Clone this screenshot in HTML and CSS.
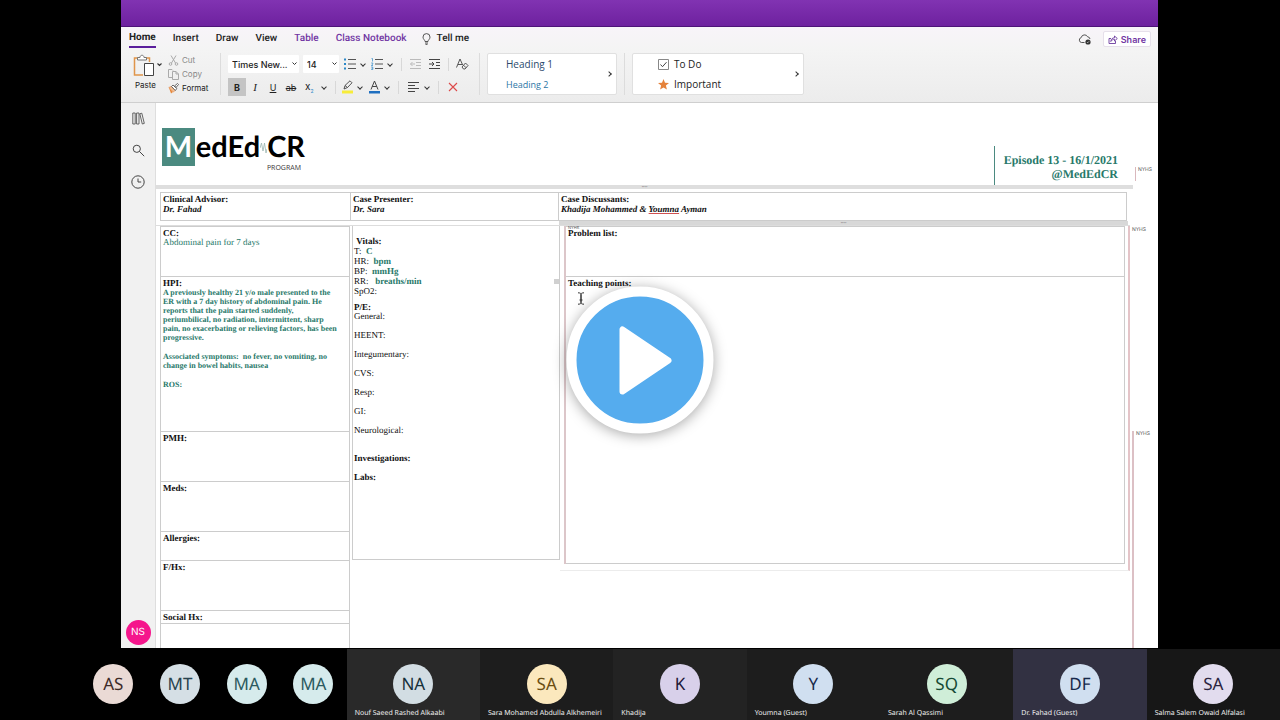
FILE: index.html
```html
<!DOCTYPE html>
<html lang="en">
<head>
    <meta charset="UTF-8">
    <meta name="viewport" content="width=device-width, initial-scale=1.0">
    <title>MedEdCR Episode 13</title>
    <link rel="stylesheet" href="styles.css">
</head>
<body>
    <div class="window">
        <div class="titlebar"></div>

        <header class="ribbon">
            <nav class="tabs">
                <a href="#" class="active">Home</a>
                <a href="#">Insert</a>
                <a href="#">Draw</a>
                <a href="#">View</a>
                <a href="#" class="context">Table</a>
                <a href="#" class="context">Class Notebook</a>
                <a href="#" class="tell-me">
                    <svg width="9" height="12" viewBox="0 0 9 12" fill="none" stroke="#444" stroke-width="0.9"><path d="M3 8.5C3 7 1 6.200 1 4.100a3.500 3.500 0 0 1 7 0C8 6.200 6 7 6 8.500zM3 10h3M3.500 11.400h2"/></svg>
                    Tell me
                </a>
                <span class="spacer"></span>
                <svg class="cloud" width="14" height="11" viewBox="0 0 14 11" fill="none" stroke="#444"><path d="M6.500 8.500H3.500a2.500 2.500 0 0 1-.3-4.900A3.400 3.400 0 0 1 9.600 2.800 2.600 2.600 0 0 1 12 5" stroke-width="0.9"/><circle cx="10" cy="8" r="2.600" fill="#333" stroke="none"/><path d="M8.900 8l.8.8 1.400-1.500" stroke="#fff" stroke-width="0.6"/></svg>
                <button class="share">
                    <svg width="10" height="9" viewBox="0 0 10 9" fill="none" stroke="#6b3a9e" stroke-width="0.9"><path d="M3 3.500H1v5h6.500V6M2.800 6.500C3 4 4.500 2.800 6.500 2.800V1L9.300 3.500 6.500 6V4.300C5 4.300 3.800 5 2.800 6.500z"/></svg>
                    Share
                </button>
            </nav>

            <div class="tools">
                <button class="paste">
                    <svg width="28" height="24" viewBox="0 0 28 24" fill="none"><path d="M5 4H1.500v17H10" stroke="#e0954a" stroke-width="1.500"/><path d="M13 4h3.500v4" stroke="#e0954a" stroke-width="1.500"/><path d="M4.500 6V3.500H7C7 .5 11 .5 11 3.500h2.500V6z" stroke="#777" fill="#fff"/><path d="M11.500 9.500h9v12h-9z" fill="#fff" stroke="#444"/><path d="M24.500 9.500l2 2 2-2" stroke="#333" stroke-width="1.100"/></svg>
                    <span>Paste</span>
                </button>
                <div class="clip-actions">
                    <button class="dim"><svg width="11" height="11" viewBox="0 0 11 11" fill="none" stroke="#aaa"><path d="M3 .5L7.500 8M8 .5L3.500 8"/><circle cx="2.500" cy="9" r="1.300"/><circle cx="8.500" cy="9" r="1.300"/></svg>Cut</button>
                    <button class="dim"><svg width="11" height="11" viewBox="0 0 11 11" fill="none" stroke="#aaa"><path d="M4 8.500H.5v-8H4l1 1M4.500 2.500H8l2.500 2.500v5.500h-6zM8 2.500V5h2.500"/></svg>Copy</button>
                    <button><svg width="11" height="11" viewBox="0 0 11 11" fill="none"><path d="M.8 4.500L5 9 3 10.500 2.500 9z" fill="#e8883a"/><path d="M.8 4.500l2.500-1L7 7.500 5.500 9z" fill="#f3c298" stroke="#e0803a" stroke-width=".6"/><path d="M3.500 3.500L5 2l3.800 3.500-1.500 2zM6.500 3l3-2.500 1 1L8 4.500z" stroke="#444" stroke-width=".8" fill="#fff"/></svg>Format</button>
                </div>
                <span class="divider"></span>

                <div class="font-tools">
                    <div class="tool-row">
                        <select class="font-name" aria-label="Font"><option>Times New...</option></select>
                        <select class="font-size" aria-label="Font size"><option>14</option></select>
                        <button class="menu" aria-label="Bullets"><svg width="12" height="12" viewBox="0 0 12 12"><path d="M4 1.500h8M4 6h8M4 10.500h8" stroke="#555"/><path d="M0 .5h2v2H0zM0 5h2v2H0zM0 9.500h2v2H0z" fill="#2b88c8"/></svg><i class="caret"></i></button>
                        <button class="menu" aria-label="Numbering"><svg width="12" height="12" viewBox="0 0 12 12" fill="none"><path d="M4 1.500h8M4 6h8M4 10.500h8" stroke="#555"/><path d="M.5.5h1v3M.2 5h1.600v1L.3 7.500h1.700M.2 9h1.600v2.500H.2M.5 10.200h1.200" stroke="#2b88c8" stroke-width=".7"/></svg><i class="caret"></i></button>
                        <span class="bar"></span>
                        <button class="single" aria-label="Decrease indent"><svg width="12" height="12" viewBox="0 0 12 12" fill="none" stroke="#bbb"><path d="M0 1.500h11M6 4.500h5M6 7.500h5M0 10.500h11M5 6H.5M2.500 4l-2 2 2 2"/></svg></button>
                        <button class="single" aria-label="Increase indent"><svg width="12" height="12" viewBox="0 0 12 12" fill="none" stroke="#444"><path d="M0 1.500h11M7 4.500h4M7 7.500h4M0 10.500h11M0 6h5M3 4l2 2-2 2"/></svg></button>
                        <span class="bar"></span>
                        <button class="single" aria-label="Clear formatting"><svg width="13" height="12" viewBox="0 0 13 12" fill="none" stroke="#444" stroke-width=".9"><path d="M.5 9.500L4 1l2.700 6M2 6.500h4M6 9l3.500-4L12 7.500 9 11H7.500zM7.500 7.200L10 9.700"/></svg></button>
                    </div>
                    <div class="tool-row">
                        <button class="letter pressed"><b>B</b></button>
                        <button class="letter"><em>I</em></button>
                        <button class="letter"><u>U</u></button>
                        <button class="letter"><s>ab</s></button>
                        <button class="menu wide"><span>x<sub>2</sub></span><i class="caret"></i></button>
                        <span class="bar"></span>
                        <button class="menu" aria-label="Highlight"><svg width="13" height="14" viewBox="0 0 13 14" fill="none"><path d="M1 10.500h11v3H1z" fill="#f7ec3a"/><path d="M3 9l1-3.500L9 .8l2 2L6.500 7.500zM4 5.500l2.500 2" stroke="#444" stroke-width=".9"/></svg><i class="caret"></i></button>
                        <button class="menu" aria-label="Font color"><svg width="13" height="14" viewBox="0 0 13 14" fill="none"><path d="M1 11h11v2.500H1z" fill="#1f6fc0"/><path d="M3 9.500L6.500 1 10 9.500M4.200 6.500h4.600" stroke="#444"/></svg><i class="caret"></i></button>
                        <span class="bar"></span>
                        <button class="menu wide" aria-label="Align"><svg width="12" height="12" viewBox="0 0 12 12" stroke="#444"><path d="M0 1.500h11M0 4.500h7M0 7.500h11M0 10.500h7"/></svg><i class="caret"></i></button>
                        <span class="bar"></span>
                        <button class="single" aria-label="Delete"><svg width="10" height="10" viewBox="0 0 10 10" stroke="#dd4a4a" stroke-width="1.100"><path d="M1 1l8 8M9 1L1 9"/></svg></button>
                    </div>
                </div>
                <span class="divider"></span>

                <div class="gallery styles">
                    <div class="choices">
                        <button class="heading-one">Heading 1</button>
                        <button class="heading-two">Heading 2</button>
                    </div>
                    <i class="caret next"></i>
                </div>
                <span class="divider"></span>
                <div class="gallery tags">
                    <div class="choices">
                        <button><svg width="11" height="11" viewBox="0 0 11 11" fill="#fff" stroke="#888"><path d="M.5.5h10v10H.5z"/><path d="M2.500 5.500l2 2.200 4-4.500" stroke="#444" fill="none"/></svg>To Do</button>
                        <button><svg width="11" height="11" viewBox="0 0 11 11"><path d="M5.500 0l1.500 3.800 4 .2-3.100 2.600 1 4-3.400-2.200-3.400 2.200 1-4L0 4l4-.2z" fill="#e5823a"/></svg>Important</button>
                    </div>
                    <i class="caret next"></i>
                </div>
            </div>
        </header>

        <div class="workspace">
            <aside class="rail">
                <button aria-label="Notebooks"><svg width="13" height="13" viewBox="0 0 13 13" fill="none" stroke="#555" stroke-width=".9"><path d="M.8 1h2.400v11H.8zM4.600 1H7v11H4.600zM7.800 1.800l2-.6 2.500 10.200-2 .6z"/></svg></button>
                <button aria-label="Search"><svg width="13" height="13" viewBox="0 0 13 13" fill="none" stroke="#444"><circle cx="4.800" cy="4.800" r="3.600"/><path d="M7.500 7.500l4.700 4.700"/></svg></button>
                <button aria-label="Recent"><svg width="14" height="14" viewBox="0 0 14 14" fill="none" stroke="#444"><circle cx="7" cy="7" r="6.200"/><path d="M7 3.500V7h3.200"/></svg></button>
                <span class="user">NS</span>
            </aside>

            <main class="page">
                <div class="page-head">
                    <div class="logo">
                        <div class="wordmark">
                            <span class="m">M</span><span>edEd</span>
                            <svg width="7" height="16" viewBox="0 0 7 16" fill="none" stroke="#9ab5b0" stroke-width=".8"><path d="M0 9l1.500-5 1.500 8 1.500-8L6 14l1-4"/></svg>
                            <span>CR</span>
                        </div>
                        <div class="program">PROGRAM</div>
                    </div>
                    <div class="episode">Episode 13 - 16/1/2021<br>@MedEdCR</div>
                </div>

                <div class="notes">
                    <div class="handle"><span>••••</span></div>
                    <table class="people">
                        <colgroup><col class="col-left"><col class="col-mid"><col></colgroup>
                        <tr>
                            <td><b>Clinical Advisor:</b><br><em>Dr. Fahad</em></td>
                            <td><b>Case Presenter:</b><br><em>Dr. Sara</em></td>
                            <td><b>Case Discussants:</b><br><em>Khadija Mohammed &amp; <u>Youmna</u> Ayman</em></td>
                        </tr>
                    </table>
                    <div class="handle inner"><span>••••</span></div>

                    <div class="columns">
                        <table class="history">
                            <tr class="tall"><td><b>CC:</b><p class="answer light">Abdominal pain for 7 days</p></td></tr>
                            <tr class="hpi"><td>
                                <b>HPI:</b>
                                <div class="answer story">
                                    <p>A previously healthy 21 y/o male presented to the<br>ER with a 7 day history of abdominal pain. He<br>reports that the pain started suddenly,<br>periumbilical, no radiation, intermittent, sharp<br>pain, no exacerbating or relieving factors, has been<br>progressive.</p>
                                    <p>Associated symptoms:&nbsp; no fever, no vomiting, no<br>change in bowel habits, nausea</p>
                                    <p>ROS:</p>
                                </div>
                            </td></tr>
                            <tr class="tall"><td><b>PMH:</b></td></tr>
                            <tr class="tall"><td><b>Meds:</b></td></tr>
                            <tr class="short"><td><b>Allergies:</b></td></tr>
                            <tr class="tall"><td><b>F/Hx:</b></td></tr>
                            <tr class="line"><td><b>Social Hx:</b></td></tr>
                            <tr class="tall"><td></td></tr>
                        </table>

                        <div class="exam">
                            <ul class="vitals">
                                <li><b>&nbsp;Vitals:</b></li>
                                <li>T:&nbsp; <b class="answer">C</b></li>
                                <li>HR:&nbsp; <b class="answer">bpm</b></li>
                                <li>BP:&nbsp; <b class="answer">mmHg</b></li>
                                <li>RR:&nbsp;&nbsp; <b class="answer">breaths/min</b></li>
                                <li>SpO2:</li>
                            </ul>
                            <b>P/E:</b>
                            <ul class="systems">
                                <li>General:</li>
                                <li>HEENT:</li>
                                <li>Integumentary:</li>
                                <li>CVS:</li>
                                <li>Resp:</li>
                                <li>GI:</li>
                                <li>Neurological:</li>
                            </ul>
                            <ul class="systems">
                                <li><b>Investigations:</b></li>
                                <li><b>Labs:</b></li>
                            </ul>
                            <span class="grip"></span>
                        </div>

                        <div class="discussion">
                            <table>
                                <tr class="tall"><td><b>Problem list:</b></td></tr>
                                <tr class="points"><td><b>Teaching points:</b></td></tr>
                            </table>
                            <span class="author overlap">NYHS</span>
                            <svg class="ibeam" width="8" height="13" viewBox="0 0 8 13" fill="none" stroke="#333"><path d="M1 .8c2 0 3 .5 3 1.700v8c0 1.200-1 1.700-3 1.700M7 .8c-2 0-3 .5-3 1.700v8c0 1.200 1 1.700 3 1.700M2.500 8h3"/></svg>
                        </div>
                    </div>
                </div>

                <span class="author edit-one">NYHS</span>
                <span class="author edit-two">NYHS</span>
                <span class="author edit-three">NYHS</span>
            </main>
        </div>
    </div>

    <footer class="participants">
        <div class="person small"><span class="avatar rose">AS</span></div>
        <div class="person small"><span class="avatar steel">MT</span></div>
        <div class="person small"><span class="avatar aqua">MA</span></div>
        <div class="person small"><span class="avatar aqua">MA</span></div>
        <div class="person lighter"><span class="avatar slate">NA</span><span class="name">Nouf Saeed Rashed Alkaabi</span></div>
        <div class="person"><span class="avatar gold">SA</span><span class="name">Sara Mohamed Abdulla Alkhemeiri</span></div>
        <div class="person light"><span class="avatar violet">K</span><span class="name">Khadija</span></div>
        <div class="person"><span class="avatar blue">Y</span><span class="name">Youmna (Guest)</span></div>
        <div class="person"><span class="avatar green">SQ</span><span class="name">Sarah Al Qassimi</span></div>
        <div class="person speaking"><span class="avatar blue">DF</span><span class="name">Dr. Fahad (Guest)</span></div>
        <div class="person dark"><span class="avatar lilac">SA</span><span class="name">Salma Salem Owaid Alfalasi</span></div>
    </footer>

    <button class="play" aria-label="Play">
        <svg width="54" height="70" viewBox="0 0 54 70"><path d="M4 4v62l46-31z" fill="#fff" stroke="#fff" stroke-width="6" stroke-linejoin="round"/></svg>
    </button>
</body>
</html>
```

FILE: styles.css
```css
* {
    box-sizing: border-box;
}
body {
    margin: 0;
    height: 100vh;
    display: flex;
    flex-direction: column;
    position: relative;
    overflow: hidden;
    background: #000;
    color: #111;
    font-family: Inter, "Liberation Sans", sans-serif;
    text-rendering: geometricPrecision;
}
button {
    display: flex;
    align-items: center;
    padding: 0;
    border: none;
    background: none;
    color: #222;
    font: inherit;
    cursor: pointer;
}
p, ul {
    margin: 0;
    padding: 0;
    list-style: none;
}
svg {
    flex: none;
}
.window {
    flex: 1;
    min-height: 0;
    margin: 0 122px 0 121px;
    display: flex;
    flex-direction: column;
    background: #fff;
}

/* Title bar and ribbon */
.titlebar {
    height: 27px;
    flex: none;
    background: linear-gradient(#8133b2, #6e219f);
    border-bottom: 1px solid #4d1478;
}
.ribbon {
    flex: none;
    height: 76px;
    background: linear-gradient(#f8f4f9, #f4f4f4 30%, #ececec);
    border-bottom: 1px solid #cfcfcf;
}
.tabs {
    height: 24px;
    padding: 0 7px 0 8px;
    display: flex;
    align-items: center;
    gap: 17px;
    font-family: Roboto, sans-serif;
    font-size: 10px;
    font-weight: 500;
}
.tabs a {
    color: #222;
    text-decoration: none;
    line-height: 16px;
}
.tabs .active {
    font-weight: 700;
    border-bottom: 2px solid #5b1f9c;
}
.tabs .context {
    color: #7136a3;
}
.tabs .tell-me {
    display: flex;
    align-items: center;
    gap: 6px;
    margin-left: -2px;
}
.spacer {
    flex: 1;
}
.cloud {
    margin-right: -6px;
}
.share {
    height: 16px;
    padding: 0 4px;
    gap: 3px;
    background: #fff;
    border: 1px solid #e6e0ea;
    border-radius: 2px;
    color: #7136a3;
    font-family: Inter, sans-serif;
    font-size: 9px;
    font-weight: 600;
}
.tools {
    display: flex;
    align-items: flex-start;
    padding: 0 12px;
    font-size: 8px;
}
.paste {
    flex-direction: column;
    align-items: flex-start;
    gap: 2px;
    margin-top: 3px;
    width: 35px;
}
.paste svg {
    overflow: visible;
}
.paste span {
    padding-left: 2px;
}
.clip-actions {
    display: flex;
    flex-direction: column;
    margin-top: 2px;
    width: 52px;
}
.clip-actions button {
    height: 14px;
    gap: 3px;
}
.clip-actions .dim {
    color: #888;
}
.divider {
    width: 1px;
    height: 42px;
    margin: 2px 7px 0 0;
    background: #dcdcdc;
}
.font-tools {
    width: 251px;
    margin-top: 4px;
    display: flex;
    flex-direction: column;
    gap: 5px;
}
.tool-row {
    display: flex;
    align-items: center;
    height: 18px;
}
select {
    height: 18px;
    margin-right: 4px;
    padding: 0 4px;
    appearance: none;
    border: none;
    border-radius: 1px;
    color: #222;
    font: 500 9px Inter, sans-serif;
    background: #fff url("data:image/svg+xml,%3Csvg xmlns='http://www.w3.org/2000/svg' width='5' height='4' fill='none' stroke='%23333'%3E%3Cpath d='M.5.5l2 2 2-2'/%3E%3C/svg%3E") no-repeat right 2px center;
}
.font-name {
    width: 71px;
}
.font-size {
    width: 36px;
}
.menu {
    width: 27px;
    height: 18px;
    justify-content: space-between;
    padding: 0 5px 0 1px;
    font-size: 10px;
}
.menu.wide {
    width: 31px;
    padding: 0 5px;
}
sub {
    font-size: 5px;
    color: #2b88c8;
}
.caret {
    width: 4px;
    height: 4px;
    border: solid #333;
    border-width: 0 1px 1px 0;
    transform: rotate(45deg);
}
.caret.next {
    transform: rotate(-45deg);
}
.bar {
    width: 1px;
    height: 13px;
    margin: 0 4px;
    background: #d8d8d8;
}
.single {
    width: 19px;
    height: 18px;
    justify-content: center;
}
.letter {
    width: 18px;
    height: 18px;
    justify-content: center;
    font-size: 9px;
}
.pressed {
    background: #c4c4c4;
}
.letter em {
    font-family: "Liberation Serif", serif;
    font-size: 11px;
}
.gallery {
    height: 42px;
    margin: 2px 7px 0 0;
    padding: 0 5px 0 18px;
    display: flex;
    align-items: center;
    justify-content: space-between;
    background: #fff;
    border: 1px solid #e0e0e0;
    border-radius: 2px;
    font-family: "Open Sans", sans-serif;
    font-size: 10px;
}
.gallery.styles {
    width: 130px;
}
.gallery.tags {
    width: 172px;
    padding-left: 25px;
}
.choices {
    display: flex;
    flex-direction: column;
    gap: 4px;
}
.choices button {
    height: 16px;
    gap: 5px;
}
.choices .heading-one {
    color: #2c4a6b;
}
.choices .heading-two {
    color: #2a75a5;
    font-size: 9px;
}

/* Workspace */
.workspace {
    flex: 1;
    min-height: 0;
    display: flex;
}
.rail {
    width: 35px;
    flex: none;
    display: flex;
    flex-direction: column;
    align-items: center;
    gap: 18px;
    padding: 8px 0 3px;
    background: #f1f1f1;
    border-right: 1px solid #dedede;
}
.rail button {
    height: 14px;
}
.user {
    width: 25px;
    margin-top: auto;
    border-radius: 50%;
    background: #f5168c;
    color: #fff;
    font-size: 10px;
    line-height: 25px;
    text-align: center;
}
.page {
    position: relative;
    flex: 1;
    min-width: 0;
    overflow: hidden;
    font-family: "Liberation Serif", serif;
    font-size: 9px;
    line-height: 10px;
}
.page-head {
    height: 82px;
    display: flex;
    justify-content: space-between;
    align-items: flex-end;
    padding: 0 40px 0 6px;
}
.logo {
    width: 143px;
    height: 57px;
    font-family: Lato, sans-serif;
}
.wordmark {
    display: flex;
    height: 38px;
    align-items: center;
    color: #000;
    font-size: 29px;
    font-weight: 700;
    line-height: 38px;
}
.wordmark .m {
    width: 34px;
    background: #4b8a80;
    color: #fff;
    text-align: center;
    margin-right: 1px;
}
.program {
    padding-right: 4px;
    color: #333;
    font-family: "Open Sans", sans-serif;
    font-size: 7px;
    line-height: 5px;
    text-align: right;
}
.episode {
    height: 39px;
    padding: 7px 0 0 9px;
    border-left: 1px solid #4b8a80;
    color: #28796a;
    font-size: 12px;
    font-weight: 700;
    line-height: 14px;
    text-align: right;
}
.notes {
    margin-right: 25px;
    padding-right: 3px;
}
.handle {
    height: 4px;
    margin-right: -3px;
    background: #dedede;
    color: #888;
    font-size: 4px;
    line-height: 4px;
    text-align: center;
}
.handle.inner {
    margin-right: 2px;
    margin-left: 403px;
    background: #d8d8d8;
}
table {
    width: 100%;
    border-collapse: collapse;
    table-layout: fixed;
}
td {
    padding: 1px 2px;
    border: 1px solid #ccc;
    vertical-align: top;
}
.people {
    margin: 3px 4px 0;
    width: calc(100% - 7px);
}
.people td {
    height: 28px;
}
.people em {
    font-weight: 700;
}
.people u {
    text-decoration-color: #d05050;
}
.col-left {
    width: 190px;
}
.col-mid {
    width: 208px;
}
.columns {
    display: flex;
    align-items: flex-start;
    border-top: 1px solid #ddd;
    padding-left: 4px;
}
.history {
    flex: none;
    width: 190px;
}
.tall {
    height: 50px;
}
.hpi {
    height: 155px;
}
.short {
    height: 29px;
}
.line {
    height: 13px;
}
.answer {
    color: #28796a;
    font-weight: 700;
    line-height: 9px;
}
.answer.light {
    font-weight: 400;
}
.answer.story {
    font-size: 8px;
}
.answer p + p {
    margin-top: 10px;
}
.history td {
    white-space: nowrap;
}
.exam {
    position: relative;
    flex: none;
    width: 208px;
    height: 334px;
    padding: 10px 1px;
    margin-left: 2px;
    border: 1px solid #ccc;
    border-top: none;
}
.vitals {
    margin-bottom: 6px;
}
.systems {
    line-height: 9px;
}
.systems li {
    margin-bottom: 10px;
}
.systems + .systems {
    margin-top: 19px;
}
.grip {
    position: absolute;
    right: 0;
    top: 53px;
    width: 5px;
    height: 5px;
    background: #d0d0d0;
}
.discussion {
    position: relative;
    flex: 1;
    padding: 0 3px 6px 4px;
    border-right: 2px solid #e4c4c8;
    border-bottom: 1px solid #ececec;
}
.discussion table {
    border-left: 2px solid #dcc6c9;
}
.discussion .points {
    height: 287px;
}
.ibeam {
    position: absolute;
    left: 17px;
    top: 66px;
}
.author {
    position: absolute;
    color: #555;
    font-family: Inter, sans-serif;
    font-size: 5px;
    line-height: 6px;
}
.overlap {
    left: 8px;
    top: 0;
    font-size: 4px;
    line-height: 4px;
}
.edit-one,
.edit-two,
.edit-three {
    padding-left: 2px;
}
.edit-one {
    right: 6px;
    top: 64px;
    height: 14px;
    border-left: 1px solid #d9b8bd;
}
.edit-two {
    right: 12px;
    top: 124px;
}
.edit-three {
    right: 8px;
    top: 328px;
    bottom: 0;
    border-left: 2px solid #dcc0c5;
}

/* Call participants */
.participants {
    flex: none;
    height: 72px;
    padding: 1px 0 0 80px;
    display: grid;
    grid-template-columns: repeat(18, 1fr);
}
.person {
    grid-column: span 2;
    min-width: 0;
    padding: 15px 8px 0;
    display: flex;
    flex-direction: column;
    align-items: center;
    gap: 5px;
    background: #1d1d1d;
    font-family: "Noto Sans", sans-serif;
}
.person.small {
    grid-column: span 1;
    background: none;
}
.person.lighter {
    background: #292929;
}
.person.light {
    background: #232323;
}
.person.dark {
    background: #171717;
}
.person.speaking {
    background: #323142;
}
.avatar {
    width: 40px;
    height: 40px;
    border-radius: 50%;
    flex: none;
    font-size: 17px;
    line-height: 40px;
    text-align: center;
}
.name {
    align-self: flex-start;
    color: #eee;
    font-size: 7px;
    line-height: 9px;
    white-space: nowrap;
}
.rose { background: #eadad5; color: #3d2a28; }
.steel { background: #d5dfe5; color: #29434e; }
.aqua { background: #d6ebec; color: #2c5a60; }
.slate { background: #d2dde3; color: #16303a; }
.gold { background: #fbe8bd; color: #6b4e12; }
.violet { background: #d8d0ea; color: #1d1838; }
.blue { background: #d0dff0; color: #17294a; }
.green { background: #cfeed8; color: #164a34; }
.lilac { background: #e2dcee; color: #2c2440; }

/* Video overlay */
.play {
    position: absolute;
    left: 50%;
    top: 50%;
    width: 147px;
    height: 147px;
    transform: translate(-50%, -50%);
    justify-content: center;
    padding-left: 10px;
    border: 10px solid #fff;
    border-radius: 50%;
    background: #55acee;
    box-shadow: 0 2px 14px rgba(0, 0, 0, 0.35);
}
```
